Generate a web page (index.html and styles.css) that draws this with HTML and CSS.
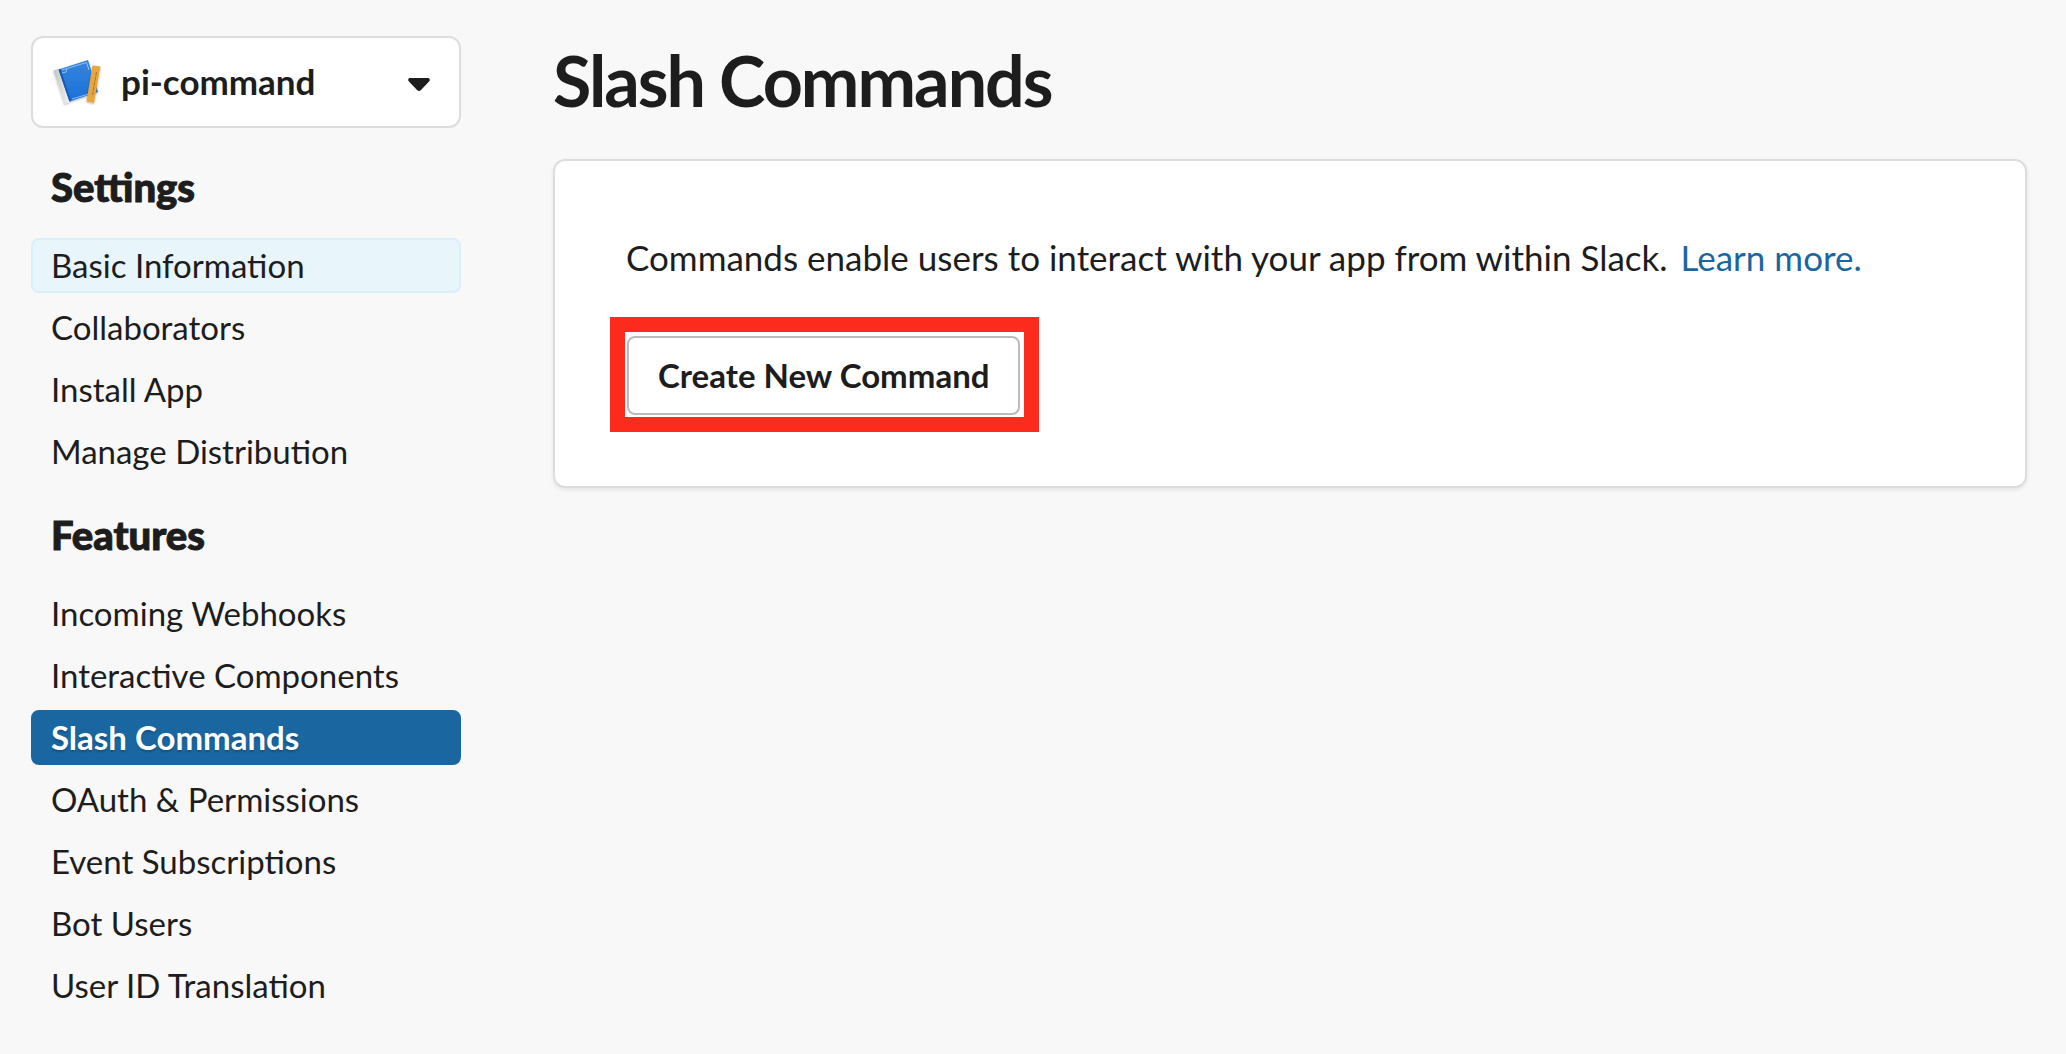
FILE: index.html
```
<!DOCTYPE html>
<html lang="en">
<head>
<meta charset="utf-8">
<meta name="viewport" content="width=device-width, initial-scale=1">
<title>Slash Commands</title>
<link rel="stylesheet" href="styles.css">
</head>
<body>
<div class="layout">
  <aside class="sidebar">
    <div class="app-picker">
      <svg class="app-icon" viewBox="0 0 52 50" aria-hidden="true">
        <defs>
          <linearGradient id="cover" x1="0" y1="0" x2="0" y2="1">
            <stop offset="0" stop-color="#3586dc"/>
            <stop offset="1" stop-color="#1c6fd8"/>
          </linearGradient>
          <linearGradient id="spine" x1="0" y1="0" x2="1" y2="0">
            <stop offset="0" stop-color="#c4c4c4"/>
            <stop offset="1" stop-color="#f0f0f0"/>
          </linearGradient>
          <filter id="shade" x="-20%" y="-20%" width="140%" height="140%">
            <feDropShadow dx="0" dy="1" stdDeviation="1" flood-opacity=".3"/>
          </filter>
        </defs>
        <g filter="url(#shade)">
          <path d="M1.500 13.500L6 12L17.500 45L12.500 47Z" fill="url(#spine)"/>
          <path d="M6.500 12.500L36 3L46 35L17.500 44.500Z" fill="url(#cover)"/>
        </g>
        <path d="M6.500 12.500L17.500 44.500L19 44L8.500 12Z" fill="#1458b0"/>
        <path d="M10 13L34.500 5.500L37 13M20 42L38.500 36.500M10 16L14 15L15 12" fill="none" stroke="#a9cff5" stroke-width=".8"/>
        <path d="M40.500 8.500L48.500 9.500L42 46L34.500 44.500Z" fill="#e8a63c" filter="url(#shade)"/>
        <path d="M44.500 15L40.500 38" stroke="#aa7426" stroke-width="1" stroke-dasharray="4 1"/>
      </svg>
      <select class="app-select" aria-label="App">
        <option>pi-command</option>
      </select>
      <svg class="caret" viewBox="0 0 22 14" aria-hidden="true">
        <path d="M1.500 0H20.500Q22.500 1 21.500 3L13 12Q11 14 9 12L.5 3Q-.5 1 1.500 0Z" fill="#1d1d1d"/>
      </svg>
    </div>
    <nav>
      <h2 class="nav-title">Settings</h2>
      <ul class="nav-list">
        <li><a class="nav-link hovered" href="#">Basic Information</a></li>
        <li><a class="nav-link" href="#">Collaborators</a></li>
        <li><a class="nav-link" href="#">Install App</a></li>
        <li><a class="nav-link" href="#">Manage Distribution</a></li>
      </ul>
      <h2 class="nav-title">Features</h2>
      <ul class="nav-list">
        <li><a class="nav-link" href="#">Incoming Webhooks</a></li>
        <li><a class="nav-link" href="#">Interactive Components</a></li>
        <li><a class="nav-link active" href="#" aria-current="page">Slash Commands</a></li>
        <li><a class="nav-link" href="#">OAuth &amp; Permissions</a></li>
        <li><a class="nav-link" href="#">Event Subscriptions</a></li>
        <li><a class="nav-link" href="#">Bot Users</a></li>
        <li><a class="nav-link" href="#">User ID Translation</a></li>
      </ul>
    </nav>
  </aside>
  <main class="content">
    <h1 class="page-title">Slash Commands</h1>
    <section class="card">
      <p class="intro">Commands enable users to interact with your app from within Slack. <a class="learn" href="#">Learn more.</a></p>
      <div class="highlight"><button class="create" type="button">Create New Command</button></div>
    </section>
  </main>
</div>
</body>
</html>
```
FILE: styles.css
```
* {
  box-sizing: border-box;
}

body {
  margin: 0;
  background: #f8f8f8;
  color: #1d1d1d;
  font-family: Lato, sans-serif;
  font-size: 33px;
}

h1, h2, p, ul {
  margin: 0;
  padding: 0;
}

.layout {
  display: grid;
  grid-template-columns: 430px minmax(0, 1fr);
  column-gap: 92px;
  padding: 36px 39px 36px 31px;
}

.app-picker {
  display: grid;
  grid-template-columns: 21px 52px 1fr 22px 31px;
  align-items: center;
  margin-bottom: 34px;
}

.app-select {
  grid-area: 1 / 1 / 2 / -1;
  width: 100%;
  height: 92px;
  padding: 0 60px 2px 88px;
  border: 2px solid #ddd;
  border-radius: 12px;
  background: #fff;
  color: inherit;
  font: 700 35px/42px Lato, sans-serif;
  appearance: none;
}

.app-icon,
.caret {
  z-index: 1;
  pointer-events: none;
}

.app-icon {
  grid-area: 1 / 2;
  width: 52px;
  height: 50px;
}

.caret {
  grid-area: 1 / 4;
  width: 22px;
  height: 14px;
  margin-top: 6px;
}

.nav-title {
  margin-bottom: 26px;
  padding-left: 20px;
  font-size: 40px;
  font-weight: 900;
  line-height: 50px;
  -webkit-text-stroke: 1px currentColor;
}

.nav-list {
  display: grid;
  row-gap: 7px;
  list-style: none;
}

.nav-list + .nav-title {
  margin-top: 31px;
}

.nav-link {
  display: block;
  padding: 6px 18px;
  border: 2px solid transparent;
  border-radius: 8px;
  color: inherit;
  line-height: 39px;
  text-decoration: none;
}

.nav-link.hovered {
  border-color: #d9effa;
  background: #e8f5fb;
}

.nav-link.active {
  border-color: #1a66a1;
  background: #1a66a1;
  color: #fff;
  font-weight: 700;
  text-shadow: 0 2px 2px rgba(0, 0, 0, .2);
}

.page-title {
  margin-bottom: 35px;
  font-size: 70px;
  font-weight: 700;
  letter-spacing: -2px;
  line-height: 88px;
}

.card {
  padding: 75px 71px 54px;
  border: 2px solid #ddd;
  border-radius: 12px;
  background: #fff;
  box-shadow: 0 2px 4px rgba(0, 0, 0, .08);
}

.intro {
  margin-bottom: 39px;
  font-size: 35px;
  line-height: 42px;
}

.learn {
  margin-left: 4px;
  color: #1a66a1;
  text-decoration: none;
}

.highlight {
  width: fit-content;
  margin-left: -16px;
  padding: 4px 4px 2px 2px;
  border: 15px solid #fc2b1e;
}

.create {
  display: block;
  height: 79px;
  padding: 0 29px 2px;
  border: 2px solid #bbb;
  border-radius: 8px;
  background: #fff;
  color: inherit;
  font: 700 33px/40px Lato, sans-serif;
}
```
